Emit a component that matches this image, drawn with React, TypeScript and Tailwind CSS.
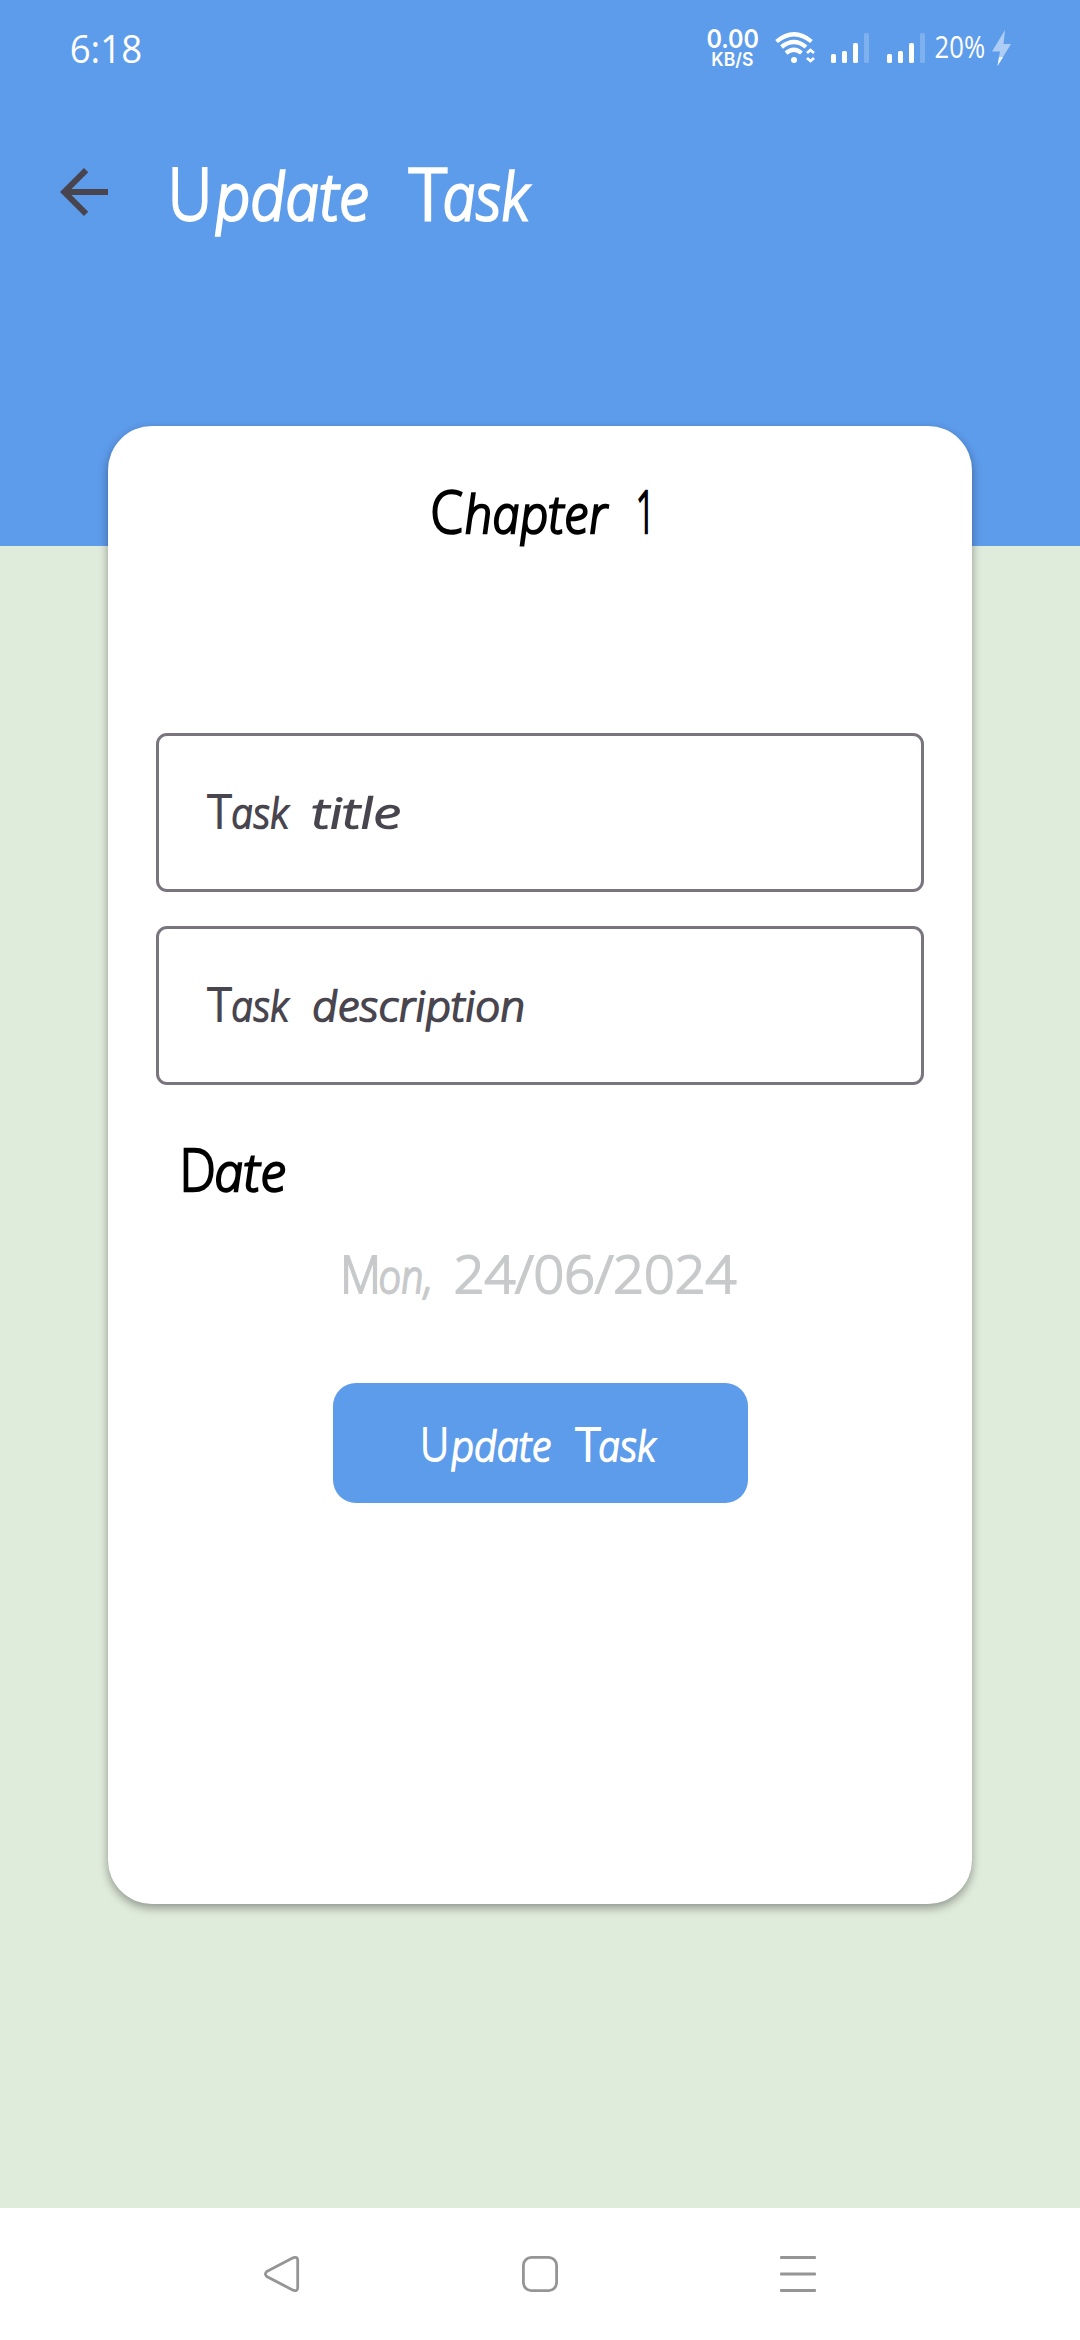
import { useLayoutEffect, useRef, useState } from "react";

/* Text stretched so that its ink fills exactly the given width. */
function Fit({ text, width, skew = 0, className = "" }: { text: string; width: number; skew?: number; className?: string }) {
  const ref = useRef<HTMLSpanElement>(null);
  const [transform, setTransform] = useState("none");
  useLayoutEffect(() => {
    const el = ref.current;
    const ctx = document.createElement("canvas").getContext("2d");
    if (!el || !ctx) return;
    const cs = getComputedStyle(el);
    ctx.font = `${cs.fontStyle} ${cs.fontWeight} ${cs.fontSize} ${cs.fontFamily}`;
    const m = ctx.measureText(text);
    const stroke = parseFloat(cs.fontSize) * 0.017;
    const left = -m.actualBoundingBoxLeft - stroke;
    const right = m.actualBoundingBoxRight + stroke;
    const s = width / (right - left);
    setTransform(`translateX(${-left * s}px) scaleX(${s}) skewX(${skew}deg)`);
  }, [text, width, skew]);
  return (
    <span className={`block whitespace-nowrap ${className}`} style={{ width }}>
      <span ref={ref} className="block w-max origin-[0_75%]" style={{ transform }}>
        {text}
      </span>
    </span>
  );
}

type WordProps = { cap?: string; capWidth?: number; gap?: number; rest?: string; width?: number };

/* An upright capital followed by slanted lowercase letters, drawn with rounded stroke ends. */
function Word({ cap, capWidth = 0, gap = 0, rest, width = 0 }: WordProps) {
  return (
    <span className="flex items-baseline font-light [stroke-linejoin:round] [-webkit-text-stroke:0.04em_currentColor]">
      {cap && <Fit text={cap} width={capWidth} />}
      {rest && (
        <span className="block" style={{ marginLeft: gap }}>
          <Fit text={rest} width={width} skew={4} className="text-[0.9em] leading-none italic" />
        </span>
      )}
    </span>
  );
}

function Signal() {
  return (
    <svg className="h-[30px] w-[38px]" viewBox="0 0 38 30" fill="#fff">
      <rect x="0" y="21" width="5" height="9" rx="1.5" />
      <rect x="11" y="18" width="5" height="12" rx="1.5" />
      <rect x="22" y="10" width="5" height="20" rx="1.5" />
      <rect x="33" y="0" width="5" height="30" rx="1.5" opacity="0.22" />
    </svg>
  );
}

function StatusBar() {
  return (
    <div className="flex h-[96px] items-start pl-[71px] text-white">
      <span className="mt-[29px] w-[635px] text-[38px] leading-[38px]">
        <Fit text="6:18" width={70} />
      </span>
      <div className="mt-[28px] flex w-[53px] flex-col items-center font-['Inter'] font-semibold">
        <Fit text="0.00" width={52} className="text-[25px] leading-[23px]" />
        <Fit text="KB/S" width={41} className="text-[18px] leading-[17px]" />
      </div>
      <svg className="ml-[16px] mt-[32px] h-[31px] w-[41px]" viewBox="0 0 41 31" fill="none" stroke="#fff">
        <path d="M1.500 9.500Q19 -5 36.500 9.500" strokeWidth="4.200" />
        <path d="M6.500 15Q19 5 31 15" strokeWidth="4.200" />
        <path d="M11 21Q19 14.500 26.500 21" strokeWidth="4.200" />
        <circle cx="19" cy="28" r="3" fill="#fff" stroke="none" />
        <path d="M32 21L35.500 18L39 21M32 26L35.500 29L39 26" strokeWidth="2.800" />
      </svg>
      <div className="ml-[15px] mt-[33px] flex gap-[18px]">
        <Signal />
        <Signal />
      </div>
      <span className="ml-[10px] mt-[31px] text-[31px] leading-[31px]">
        <Fit text="20%" width={50} />
      </span>
      <svg className="ml-[7px] mt-[30px] h-[36px] w-[19px]" viewBox="0 0 19 36">
        <path d="M13 0L0 21.500H8L5.500 36L19 14H11.500Z" fill="#fff" opacity="0.5" />
        <path d="M7 27H11.200L5.500 36Z" fill="#fff" opacity="0.8" />
      </svg>
    </div>
  );
}

function Field({ second, width }: { second: string; width: number }) {
  return (
    <div className="flex h-[159px] items-start rounded-[11px] border-3 border-[#79747e] pl-[48px] pt-[51px] text-[#49454f]">
      <div className="flex items-baseline gap-[23px] text-[46px] leading-[46px]">
        <Word cap="T" capWidth={25} gap={1} rest="ask" width={58} />
        <Word rest={second} width={width} />
      </div>
    </div>
  );
}

export default function App() {
  return (
    <div className="flex h-[2340px] w-[1080px] flex-col overflow-hidden bg-[#dfebdb] font-['Open_Sans',sans-serif]">
      <header className="h-[546px] shrink-0 bg-[#5d9beb]">
        <StatusBar />
        <div className="flex h-[192px] items-center pl-[48px]">
          <svg className="size-[72px]" viewBox="0 0 24 24" fill="#49454f">
            <path d="M20 11H7.830l5.590-5.590L12 4l-8 8 8 8 1.410-1.410L7.830 13H20v-2z" />
          </svg>
          <h1 className="ml-[52px] flex h-[72px] gap-[39px] text-[72px] leading-[72px] text-white">
            <Word cap="U" capWidth={36} gap={5} rest="pdate" width={156} />
            <Word cap="T" capWidth={40} gap={-3} rest="ask" width={88} />
          </h1>
        </div>
      </header>

      <main className="z-10 mx-[108px] -mt-[120px] flex h-[1478px] shrink-0 flex-col rounded-[44px] bg-white px-[48px] pt-[55px] shadow-[0_4px_10px_rgba(0,0,0,0.36)]">
        <h2 className="flex h-[60px] justify-center gap-[27px] text-[58px] leading-[60px] text-black">
          <Word cap="C" capWidth={31} gap={2} rest="hapter" width={146} />
          <Word cap="1" capWidth={10} />
        </h2>
        <div className="mt-[192px] flex flex-col gap-[34px]">
          <Field second="title" width={88} />
          <Field second="description" width={210} />
        </div>
        <div className="mt-[55px] h-[58px] pl-[27px] text-[58px] leading-[58px] text-black">
          <Word cap="D" capWidth={31} gap={2} rest="ate" width={71} />
        </div>
        <div className="mt-[49px] flex h-[52px] justify-center gap-[25px] text-[51px] leading-[52px] text-[#c8c9cb]">
          <Word cap="M" capWidth={33} gap={3} rest="on," width={50} />
          <Word cap="24/06/2024" capWidth={282} />
        </div>
        <button className="mt-[84px] flex h-[120px] w-[415px] items-center justify-center gap-[23px] self-center rounded-[23px] bg-[#5d9beb] text-[46px] leading-[46px] text-white">
          <Word cap="U" capWidth={23} gap={4} rest="pdate" width={102} />
          <Word cap="T" capWidth={26} gap={-1} rest="ask" width={58} />
        </button>
      </main>

      <nav className="mt-auto flex h-[132px] shrink-0 items-start justify-between bg-white px-[264px] pt-[48px]">
        <svg className="size-[36px]" viewBox="0 0 36 36" fill="none" stroke="#959595" strokeWidth="2.800">
          <path d="M2.800 15.500L29 1.800Q33.500 0.300 33.700 4V32Q33.500 35.700 29 34.200L2.800 20.500Q0 18 2.800 15.500Z" />
        </svg>
        <svg className="size-[36px]" viewBox="0 0 36 36" fill="none" stroke="#959595" strokeWidth="2.800">
          <rect x="1.400" y="1.400" width="33.200" height="33.200" rx="8" />
        </svg>
        <svg className="size-[36px]" viewBox="0 0 36 36" fill="#959595">
          <rect y="0" width="36" height="3" rx="1" />
          <rect y="16.500" width="36" height="3" rx="1" />
          <rect y="33" width="36" height="3" rx="1" />
        </svg>
      </nav>
    </div>
  );
}
